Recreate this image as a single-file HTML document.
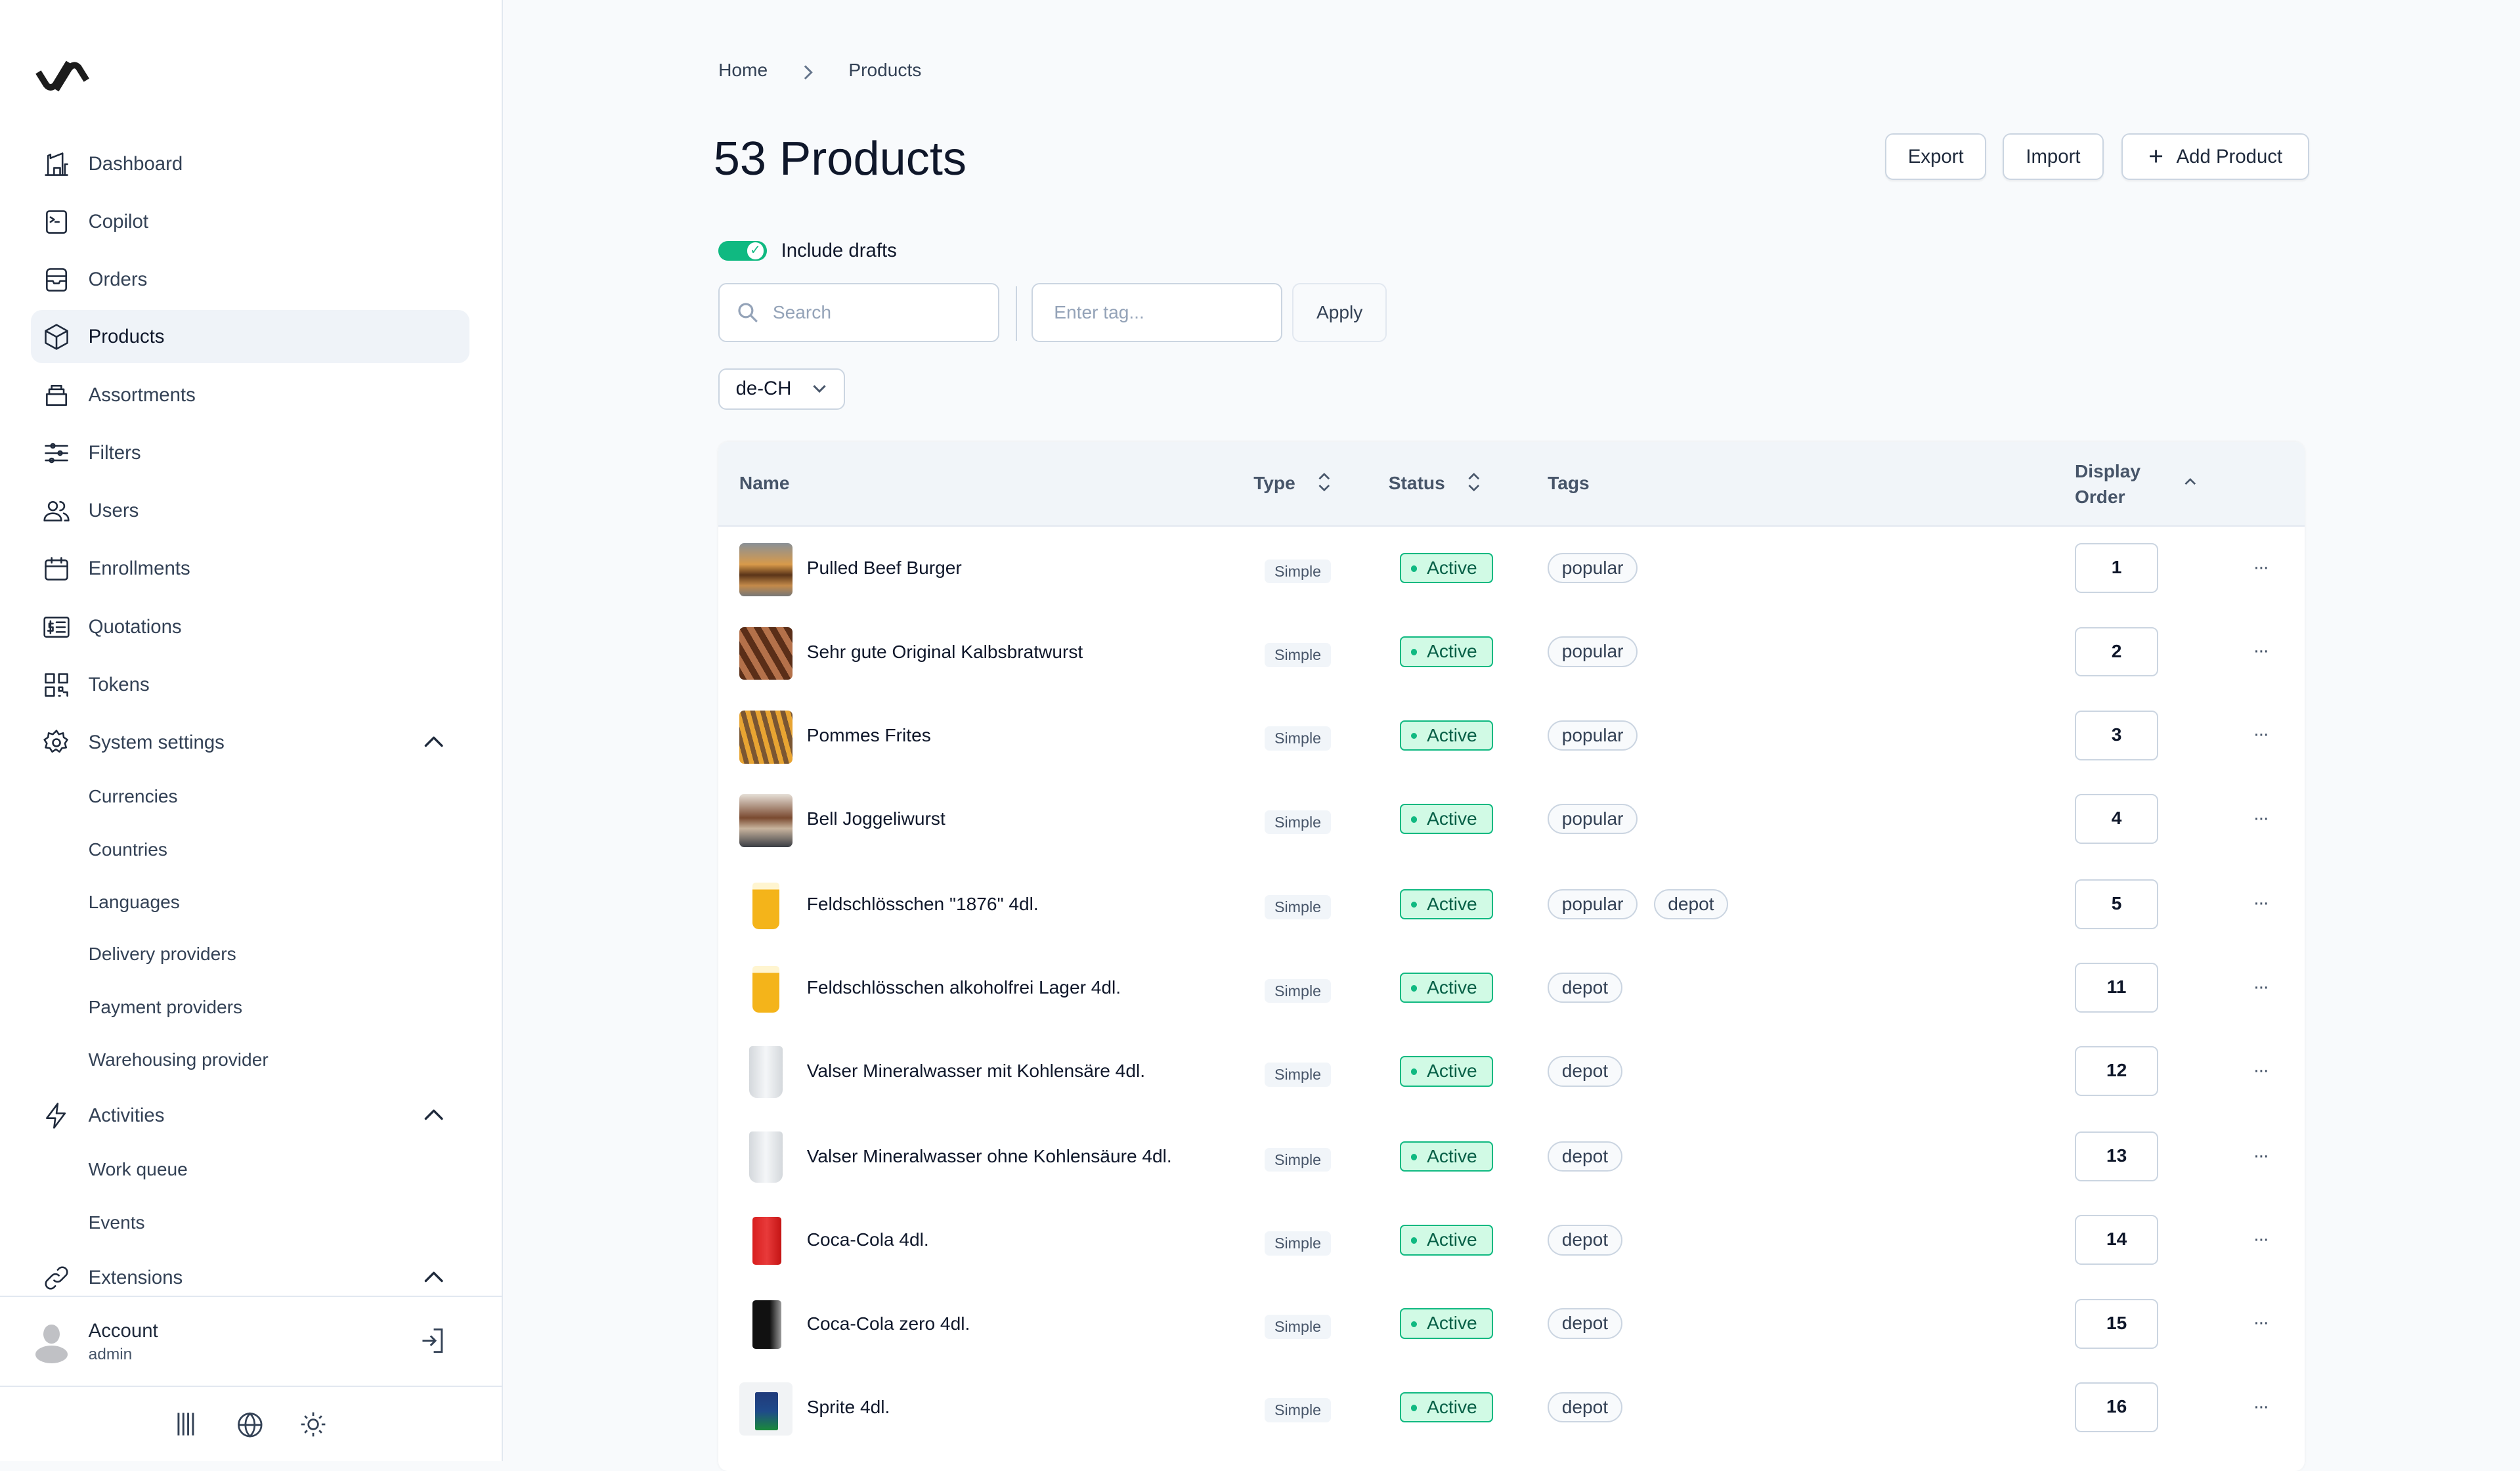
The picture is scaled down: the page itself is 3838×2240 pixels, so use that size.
<!DOCTYPE html>
<html><head><meta charset="utf-8"><style>
html,body{margin:0;padding:0}
body{width:1568px;height:909px;zoom:2.44770;overflow:hidden;background:#f8fafc;font-family:"Liberation Sans",Arial,sans-serif;position:relative;color:#0f172a}
.abs{position:absolute}
.side{position:absolute;left:0;top:0;width:312px;height:909px;background:#fff;border-right:1px solid #e2e8f0}
.nav{position:absolute;left:19px;width:273px;height:32px;border-radius:7px;display:flex;align-items:center;font-size:12px;color:#334155}
.nav svg{position:absolute;left:7px;width:18px;height:18px;fill:none;stroke:#1e293b;stroke-width:1.4;stroke-linecap:round;stroke-linejoin:round}
.nav span{position:absolute;left:36px}
.sub{position:absolute;left:55px;font-size:11.5px;color:#334155}
.chev{position:absolute;right:16px;width:12px;height:12px;fill:none;stroke:#334155;stroke-width:1.4}
.btn{position:absolute;top:83px;height:29px;background:#fff;border:1px solid #cbd5e1;border-radius:5px;font-size:12px;color:#1e293b;display:flex;align-items:center;justify-content:center;box-sizing:border-box;box-shadow:0 1px 1px rgba(0,0,0,.05)}
.inp{position:absolute;top:176px;height:37px;background:#fff;border:1px solid #cbd5e1;border-radius:5px;box-sizing:border-box;font-size:11.5px;color:#94a3b8;display:flex;align-items:center}
.table{position:absolute;left:447px;top:275px;width:987px;height:640px;background:#fff;border-radius:6px;box-shadow:0 0 2px rgba(0,0,0,.06)}
.th{position:absolute;font-size:11.5px;font-weight:bold;color:#475569}
.row{position:absolute;left:0;width:987px;height:52px}
.row .img{position:absolute;left:13px;top:10px;width:33px;height:33px;border-radius:3px}
.row .nm{position:absolute;left:55px;top:19px;font-size:11.5px;color:#0f172a}
.type{position:absolute;left:340px;top:20px;height:15px;padding:0 6px;background:#f1f5f9;border-radius:3px;font-size:9.5px;line-height:15px;color:#475569}
.act{position:absolute;left:424px;top:16px;height:19px;width:58px;box-sizing:border-box;background:#d1fae5;border:1px solid #10b981;border-radius:3px;font-size:11.5px;line-height:17px;color:#065f46;padding-left:16px}
.act:before{content:"";position:absolute;left:6px;top:7px;width:4px;height:4px;border-radius:2px;background:#10b981}
.tag{position:absolute;top:16px;height:19px;box-sizing:border-box;border:1px solid #cbd5e1;border-radius:10px;background:#f8fafc;font-size:11.5px;line-height:17px;padding:0 8px;color:#334155}
.ord{position:absolute;left:844px;top:10px;width:52px;height:31px;box-sizing:border-box;border:1px solid #cbd5e1;border-radius:4px;font-size:11.5px;font-weight:bold;text-align:center;line-height:29px;background:#fff}
.dots{position:absolute;left:955px;top:18px;font-size:12px;color:#475569;letter-spacing:-1px}
</style></head><body>
<div class="side">
<svg class="abs" style="left:21px;top:32px" width="36" height="26" viewBox="0 0 36 26" fill="none" stroke="#1c1c1c" stroke-width="4"><path d="M3 13 L8 21 Q10.5 24 13.5 21 L22 7"/><path d="M14 24 L22 11 Q25 7 28 10 L33 18"/></svg>

<div class="nav" style="top:86px"><svg viewBox="0 0 24 24"><path d="M3 21h18M5 21V5l2-1v3l10-4v18M15 21v-6h-5v6M19 21V12h2"/></svg><span>Dashboard</span></div>
<div class="nav" style="top:122px"><svg viewBox="0 0 24 24"><rect x="4" y="3" width="16" height="18" rx="2"/><path d="M7 8l3 2-3 2M11 12h3"/></svg><span>Copilot</span></div>
<div class="nav" style="top:158px"><svg viewBox="0 0 24 24"><path d="M4 13V6a3 3 0 013-3h10a3 3 0 013 3v7M4 13h5l1 2h4l1-2h5v6a2 2 0 01-2 2H6a2 2 0 01-2-2zM4 9h16"/></svg><span>Orders</span></div>
<div class="nav" style="top:193px;background:#eff3f8;height:33px"><svg viewBox="0 0 24 24"><path d="M12 2l9 5v10l-9 5-9-5V7zM3 7l9 5 9-5M12 12v10"/></svg><span style="color:#0f172a">Products</span></div>
<div class="nav" style="top:230px"><svg viewBox="0 0 24 24"><path d="M4 11h16v9H4zM6 11V7h12v4M8 7V4h8v3"/></svg><span>Assortments</span></div>
<div class="nav" style="top:266px"><svg viewBox="0 0 24 24"><path d="M3 6h18M3 12h18M3 18h18"/><circle cx="9" cy="6" r="1.6"/><circle cx="15" cy="12" r="1.6"/><circle cx="8" cy="18" r="1.6"/></svg><span>Filters</span></div>
<div class="nav" style="top:302px"><svg viewBox="0 0 24 24"><circle cx="9" cy="8" r="3.5"/><path d="M2 20c0-4 3-6 7-6s7 2 7 6zM15 4.5a3.5 3.5 0 010 7M18 14c2 .7 4 2.5 4 6h-3"/></svg><span>Users</span></div>
<div class="nav" style="top:338px"><svg viewBox="0 0 24 24"><rect x="3" y="5" width="18" height="16" rx="2"/><path d="M3 10h18M8 3v4M16 3v4"/></svg><span>Enrollments</span></div>
<div class="nav" style="top:374px"><svg viewBox="0 0 24 24"><rect x="2" y="4" width="20" height="16" rx="1.5"/><path d="M12 8h7M12 12h7M12 16h7M7 7v10M9 9H6v3h3v3H5"/></svg><span>Quotations</span></div>
<div class="nav" style="top:410px"><svg viewBox="0 0 24 24"><rect x="3" y="3" width="7" height="7"/><rect x="14" y="3" width="7" height="7"/><rect x="3" y="14" width="7" height="7"/><path d="M14 14h3v3h-3zM18 18h3v3M14 21h1"/></svg><span>Tokens</span></div>
<div class="nav" style="top:446px"><svg viewBox="0 0 24 24"><circle cx="12" cy="12" r="3"/><path d="M12 2l2 3 3.5-1 .5 3.5 3 2-2 3 1 3.5-3.5.5-2 3-3-2-3 2-2-3-3.5-.5 1-3.5-2-3 3-2 .5-3.5 3.5 1z"/></svg><span>System settings</span><svg class="chev" style="left:auto;right:16px;width:12px;height:12px" viewBox="0 0 12 12"><path d="M1 8l5-5 5 5"/></svg></div>
<div class="sub" style="top:489px">Currencies</div>
<div class="sub" style="top:522px">Countries</div>
<div class="sub" style="top:555px">Languages</div>
<div class="sub" style="top:587px">Delivery providers</div>
<div class="sub" style="top:620px">Payment providers</div>
<div class="sub" style="top:653px">Warehousing provider</div>
<div class="nav" style="top:678px"><svg viewBox="0 0 24 24"><path d="M13 2L4 14h7l-1 8 9-12h-7z"/></svg><span>Activities</span><svg class="chev" style="left:auto;right:16px;width:12px;height:12px" viewBox="0 0 12 12"><path d="M1 8l5-5 5 5"/></svg></div>
<div class="sub" style="top:721px">Work queue</div>
<div class="sub" style="top:754px">Events</div>
<div class="nav" style="top:779px"><svg viewBox="0 0 24 24"><path d="M10 14a4 4 0 005.7 0l4-4a4 4 0 00-5.7-5.7l-1 1M14 10a4 4 0 00-5.7 0l-4 4a4 4 0 005.7 5.7l1-1"/></svg><span>Extensions</span><svg class="chev" style="left:auto;right:16px;width:12px;height:12px" viewBox="0 0 12 12"><path d="M1 8l5-5 5 5"/></svg></div>
<div class="abs" style="left:0;top:806px;width:312px;border-top:1px solid #e2e8f0"></div>
<div class="abs" style="left:27px;top:824px;width:10px;height:12px;border-radius:50%;background:#c0c1c5"></div>
<div class="abs" style="left:22px;top:837px;width:20px;height:11px;border-radius:50%;background:#c0c1c5"></div>
<div class="abs" style="left:55px;top:821px;font-size:12px;color:#1e293b">Account</div>
<div class="abs" style="left:55px;top:837px;font-size:10px;color:#475569">admin</div>
<svg class="abs" style="left:262px;top:826px" width="16" height="16" viewBox="0 0 16 16" fill="none" stroke="#334155" stroke-width="1.2"><path d="M8 1h5v14H8M1 8h8M6 5l3 3-3 3"/></svg>
<div class="abs" style="left:0;top:862px;width:312px;border-top:1px solid #e2e8f0"></div>
<svg class="abs" style="left:109px;top:878px" width="14" height="16" viewBox="0 0 14 16" stroke="#334155" stroke-width="1.2"><path d="M2 1v14M5 1v14M8 1v14M11 1v14"/></svg>
<svg class="abs" style="left:147px;top:878px" width="17" height="17" viewBox="0 0 24 24" fill="none" stroke="#334155" stroke-width="1.6"><circle cx="12" cy="12" r="10"/><path d="M2 12h20M12 2c3 3 4 6 4 10s-1 7-4 10c-3-3-4-6-4-10s1-7 4-10z"/></svg>
<svg class="abs" style="left:186px;top:877px" width="18" height="18" viewBox="0 0 24 24" fill="none" stroke="#334155" stroke-width="1.5"><circle cx="12" cy="12" r="4"/><path d="M12 2v3M12 19v3M2 12h3M19 12h3M5 5l2 2M17 17l2 2M5 19l2-2M17 7l2-2"/></svg>
</div>

<div class="abs" style="left:447px;top:37px;font-size:11.5px;color:#334155">Home</div>
<svg class="abs" style="left:499px;top:40px" width="8" height="10" viewBox="0 0 8 10" fill="none" stroke="#64748b" stroke-width="1.2"><path d="M2 1l4 4-4 4"/></svg>
<div class="abs" style="left:528px;top:37px;font-size:11.5px;color:#334155">Products</div>
<div class="abs" style="left:444px;top:82px;font-size:29.5px;color:#0f172a">53 Products</div>
<div class="btn" style="left:1173px;width:63px">Export</div>
<div class="btn" style="left:1246px;width:63px">Import</div>
<div class="btn" style="left:1320px;width:117px"><span style="font-size:16px;margin-right:8px;font-weight:300">+</span>Add Product</div>

<div class="abs" style="left:447px;top:150px;width:30px;height:12px;border-radius:6px;background:#10b981"></div>
<div class="abs" style="left:464px;top:150px;width:12px;height:12px;border-radius:6px;background:#fff;border:1px solid #10b981;box-sizing:border-box;font-size:8px;color:#10b981;text-align:center;line-height:10px">✓</div>
<div class="abs" style="left:486px;top:149px;font-size:12px;color:#0f172a">Include drafts</div>

<div class="inp" style="left:447px;width:175px"><svg style="margin:0 9px 0 11px" width="13" height="13" viewBox="0 0 16 16" fill="none" stroke="#94a3b8" stroke-width="1.6"><circle cx="6.5" cy="6.5" r="5"/><path d="M10 10l5 5"/></svg>Search</div>
<div class="abs" style="left:632px;top:178px;width:1px;height:34px;background:#cbd5e1"></div>
<div class="inp" style="left:642px;width:156px;padding-left:13px">Enter tag...</div>
<div class="inp" style="left:804px;width:59px;color:#334155;justify-content:center;background:#f8fafc;border-color:#e2e8f0">Apply</div>
<div class="inp" style="left:447px;top:229px;height:26px;width:79px;color:#0f172a;padding-left:10px;font-size:12px">de-CH<svg style="margin-left:13px" width="9" height="6" viewBox="0 0 9 6" fill="none" stroke="#475569" stroke-width="1.2"><path d="M1 1l3.5 3.5L8 1"/></svg></div>

<div class="table">
<div class="abs" style="left:0;top:0;width:987px;height:52px;background:#f1f5f9;border-radius:6px 6px 0 0;border-bottom:1px solid #e2e8f0"></div>
<div class="th" style="left:13px;top:19px">Name</div>
<div class="th" style="left:333px;top:19px">Type</div>
<svg class="abs" style="left:373px;top:18px" width="8" height="14" viewBox="0 0 8 14" fill="none" stroke="#475569" stroke-width="1.1"><path d="M1 5l3-3 3 3M1 9l3 3 3-3"/></svg>
<div class="th" style="left:417px;top:19px">Status</div>
<svg class="abs" style="left:466px;top:18px" width="8" height="14" viewBox="0 0 8 14" fill="none" stroke="#475569" stroke-width="1.1"><path d="M1 5l3-3 3 3M1 9l3 3 3-3"/></svg>
<div class="th" style="left:516px;top:19px">Tags</div>
<div class="th" style="left:844px;top:10px;line-height:16px">Display<br>Order</div>
<svg class="abs" style="left:912px;top:21px" width="8" height="6" viewBox="0 0 8 6" fill="none" stroke="#475569" stroke-width="1.1"><path d="M1 5l3-3 3 3"/></svg>

<div class="row" style="top:53px"><div class="img" style="background:linear-gradient(#8a9096,#d89a4a 40%,#5a3418 60%,#c48a4a 80%,#777)"></div><div class="nm">Pulled Beef Burger</div><div class="type">Simple</div><div class="act">Active</div><div class="tag" style="left:516px">popular</div><div class="ord">1</div><div class="dots">···</div></div>
<div class="row" style="top:105px"><div class="img" style="background:repeating-linear-gradient(60deg,#5a2e18 0 4px,#b4714a 4px 8px)"></div><div class="nm">Sehr gute Original Kalbsbratwurst</div><div class="type">Simple</div><div class="act">Active</div><div class="tag" style="left:516px">popular</div><div class="ord">2</div><div class="dots">···</div></div>
<div class="row" style="top:157px"><div class="img" style="background:repeating-linear-gradient(75deg,#e8a432 0 3px,#7a5632 3px 6px)"></div><div class="nm">Pommes Frites</div><div class="type">Simple</div><div class="act">Active</div><div class="tag" style="left:516px">popular</div><div class="ord">3</div><div class="dots">···</div></div>
<div class="row" style="top:209px"><div class="img" style="background:linear-gradient(#e6e0d8,#7a4a30 45%,#c8b49e 65%,#3a3d44)"></div><div class="nm">Bell Joggeliwurst</div><div class="type">Simple</div><div class="act">Active</div><div class="tag" style="left:516px">popular</div><div class="ord">4</div><div class="dots">···</div></div>
<div class="row" style="top:262px"><div class="img" style="left:21px;width:17px;top:12px;height:29px;background:linear-gradient(#fff5d0 0 15%,#f4b41a 15%);border-radius:2px 2px 4px 4px"></div><div class="nm">Feldschlösschen "1876" 4dl.</div><div class="type">Simple</div><div class="act">Active</div><div class="tag" style="left:516px">popular</div><div class="tag" style="left:582px">depot</div><div class="ord">5</div><div class="dots">···</div></div>
<div class="row" style="top:314px"><div class="img" style="left:21px;width:17px;top:12px;height:29px;background:linear-gradient(#fff5d0 0 15%,#f4b41a 15%);border-radius:2px 2px 4px 4px"></div><div class="nm">Feldschlösschen alkoholfrei Lager 4dl.</div><div class="type">Simple</div><div class="act">Active</div><div class="tag" style="left:516px">depot</div><div class="ord">11</div><div class="dots">···</div></div>
<div class="row" style="top:366px"><div class="img" style="left:19px;width:21px;top:10px;height:32px;background:linear-gradient(90deg,#d4d8dc,#f4f6f8,#d4d8dc);border-radius:2px 2px 5px 5px"></div><div class="nm">Valser Mineralwasser mit Kohlensäre 4dl.</div><div class="type">Simple</div><div class="act">Active</div><div class="tag" style="left:516px">depot</div><div class="ord">12</div><div class="dots">···</div></div>
<div class="row" style="top:419px"><div class="img" style="left:19px;width:21px;top:10px;height:32px;background:linear-gradient(90deg,#d4d8dc,#f4f6f8,#d4d8dc);border-radius:2px 2px 5px 5px"></div><div class="nm">Valser Mineralwasser ohne Kohlensäure 4dl.</div><div class="type">Simple</div><div class="act">Active</div><div class="tag" style="left:516px">depot</div><div class="ord">13</div><div class="dots">···</div></div>
<div class="row" style="top:471px"><div class="img" style="left:21px;width:18px;top:11px;height:30px;background:linear-gradient(90deg,#d81e1e,#e83a3a 50%,#c41414);border-radius:2px"></div><div class="nm">Coca-Cola 4dl.</div><div class="type">Simple</div><div class="act">Active</div><div class="tag" style="left:516px">depot</div><div class="ord">14</div><div class="dots">···</div></div>
<div class="row" style="top:523px"><div class="img" style="left:21px;width:18px;top:11px;height:30px;background:linear-gradient(90deg,#111 0 60%,#9a9a9a);border-radius:2px"></div><div class="nm">Coca-Cola zero 4dl.</div><div class="type">Simple</div><div class="act">Active</div><div class="tag" style="left:516px">depot</div><div class="ord">15</div><div class="dots">···</div></div>
<div class="row" style="top:575px"><div class="img" style="background:#f1f3f5"></div><div class="img" style="left:23px;width:14px;top:16px;height:24px;background:linear-gradient(#203a7a,#1f4a8a 50%,#1a8a3a);border-radius:1px"></div><div class="nm">Sprite 4dl.</div><div class="type">Simple</div><div class="act">Active</div><div class="tag" style="left:516px">depot</div><div class="ord">16</div><div class="dots">···</div></div>
</div>
</body></html>
